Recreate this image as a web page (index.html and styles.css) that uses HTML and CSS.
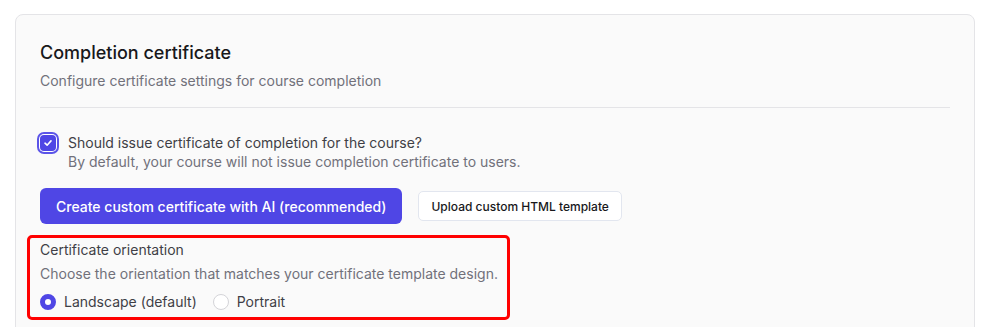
FILE: index.html
```html
<!DOCTYPE html>
<html lang="en">
<head>
    <meta charset="UTF-8">
    <meta name="viewport" content="width=device-width, initial-scale=1.0">
    <title>Completion certificate</title>
    <link rel="stylesheet" href="styles.css">
</head>
<body>
    <div class="card">
        <h2 class="card-title">Completion certificate</h2>
        <p class="card-subtitle">Configure certificate settings for course completion</p>
        <div class="divider"></div>

        <label class="check-row">
            <span class="checkbox">
                <svg width="10" height="10" viewBox="0 0 10 10"><path d="M2 5.2 L4.1 7.2 L8 2.9" fill="none" stroke="#fff" stroke-width="1.6" stroke-linecap="round" stroke-linejoin="round"/></svg>
            </span>
            <span class="check-text">
                <span class="check-label">Should issue certificate of completion for the course?</span>
                <span class="check-help">By default, your course will not issue completion certificate to users.</span>
            </span>
        </label>

        <div class="actions">
            <button class="btn-primary">Create custom certificate with AI (recommended)</button>
            <button class="btn-secondary">Upload custom HTML template</button>
        </div>

        <div class="orientation">
            <div class="orientation-title">Certificate orientation</div>
            <div class="orientation-help">Choose the orientation that matches your certificate template design.</div>
            <div class="radio-group">
                <label class="radio-row"><span class="radio checked"></span>Landscape (default)</label>
                <label class="radio-row"><span class="radio"></span>Portrait</label>
            </div>
        </div>
    </div>
</body>
</html>
```

FILE: styles.css
```css
* {
    margin: 0;
    padding: 0;
    box-sizing: border-box;
    font-family: 'Inter', 'Noto Sans', sans-serif;
}

body {
    background: #ffffff;
    overflow: hidden;
}

.card {
    margin: 14px 12px 0 15px;
    width: 960px;
    height: 330px;
    background: #fafafa;
    border: 1px solid #e4e4e7;
    border-radius: 8px;
    padding: 24px 24px 0 24px;
}

.card-title {
    font-size: 18px;
    font-weight: 500;
    line-height: 28px;
    color: #18181b;
}

.card-subtitle {
    margin-top: 4px;
    font-size: 14px;
    line-height: 20px;
    color: #71717a;
}

.divider {
    margin-top: 16px;
    height: 1px;
    background: #e4e4e7;
}

.check-row {
    display: flex;
    gap: 12px;
    margin-top: 25px;
}

.checkbox {
    flex: none;
    width: 16px;
    height: 16px;
    margin: 2px 0 0 0;
    border-radius: 4px;
    background: #4f46e5;
    box-shadow: 0 0 0 1px #fff, 0 0 0 3px #5b54e8;
    display: flex;
    align-items: center;
    justify-content: center;
}

.check-text {
    display: flex;
    flex-direction: column;
    font-size: 14px;
    line-height: 20px;
}

.check-label {
    color: #3f3f46;
}

.check-help {
    color: #71717a;
    margin-top: -1px;
}

.actions {
    display: flex;
    align-items: center;
    gap: 16px;
    margin-top: 16px;
}

.btn-primary {
    height: 36px;
    padding: 0 16px;
    background: #4f46e5;
    color: #fff;
    border: none;
    border-radius: 6px;
    font-size: 14px;
    font-weight: 500;
}

.btn-secondary {
    height: 30px;
    padding: 0 12px;
    background: #fff;
    color: #18181b;
    border: 1px solid #e2e6ef;
    border-radius: 5px;
    font-size: 12px;
    font-weight: 500;
}

.orientation {
    margin: 11px 0 0 -13px;
    width: 483px;
    border: 3px solid #ff0000;
    border-radius: 5px;
    padding: 2px 4px 5px 10px;
}

.orientation-title {
    font-size: 14px;
    line-height: 20px;
    color: #3f3f46;
}

.orientation-help {
    margin-top: 4px;
    font-size: 14px;
    line-height: 20px;
    color: #71717a;
    white-space: nowrap;
}

.radio-group {
    display: flex;
    gap: 16px;
    margin-top: 8px;
}

.radio-row {
    display: flex;
    align-items: center;
    gap: 8px;
    font-size: 14px;
    line-height: 20px;
    color: #3f3f46;
}

.radio {
    width: 16px;
    height: 16px;
    border-radius: 50%;
    border: 1px solid #d4d4d8;
    background: #fff;
}

.radio.checked {
    border: 5px solid #4f46e5;
}
```
